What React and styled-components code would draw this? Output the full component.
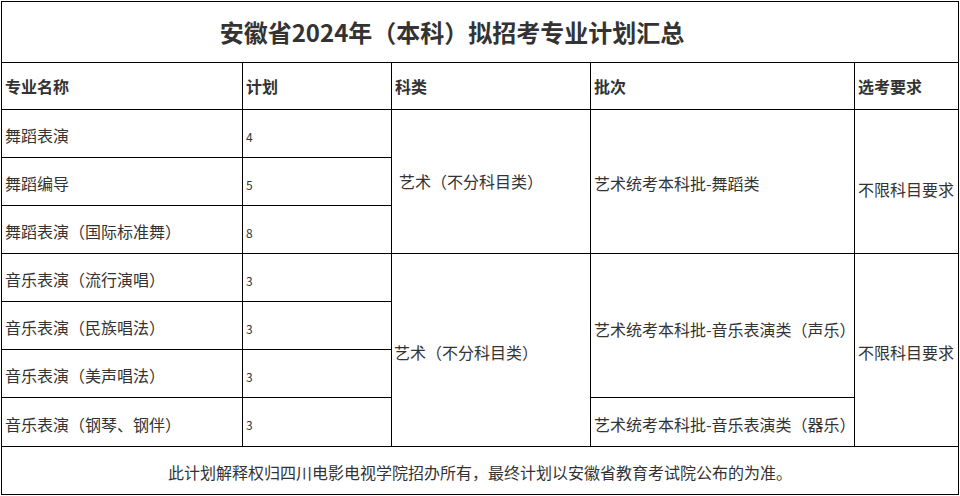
import React from 'react';
import styled, {createGlobalStyle} from 'styled-components';

const GlobalStyle = createGlobalStyle`
    html, body {
        margin: 0;
        padding: 0;
        background: #fff;
    }
    body {
        font-family: "Noto Sans CJK SC", "Liberation Sans", sans-serif;
        color: #333;
    }
`;

const Page = styled.div`
    padding: 1px 0 0 1px;
`;

const Sheet = styled.div`
    display: grid;
    grid-template-columns: 241px 149px 199px 264px 104px;
    grid-template-rows: 61px 47px repeat(6, 48px) 49px 48px;
    width: 957px;
    border-left: 1px solid #000;
    border-top: 1px solid #000;
`;

const Cell = styled.div`
    box-sizing: border-box;
    display: flex;
    align-items: center;
    grid-row: span ${p => p.$rows || 1};
    grid-column: span ${p => p.$cols || 1};
    border-right: 1px solid #000;
    border-bottom: 1px solid #000;
    padding: ${p => p.$nudge > 0 ? p.$nudge : 0}px 0 ${p => p.$nudge < 0 ? -p.$nudge : 0}px ${p => p.$indent ?? 3}px;
    font-size: 16px;
    line-height: 1;
    white-space: nowrap;
    color: #333;
`;

const TitleCell = styled(Cell)`
    grid-column: 1 / -1;
    justify-content: center;
    padding: 0 56px 0 0;
    font-size: 24px;
    font-weight: 700;
`;

const HeadCell = styled(Cell)`
    font-weight: 700;
`;

const NumCell = styled(Cell)`
    font-size: 12px;
    padding-top: 6px;
`;

const NoteCell = styled(Cell)`
    grid-column: 1 / -1;
    justify-content: center;
    padding: 2px 0 0 0;
`;

const heads = ['专业名称', '计划', '科类', '批次', '选考要求'];

const dance = [
    ['舞蹈表演', 4],
    ['舞蹈编导', 5],
    ['舞蹈表演（国际标准舞）', 8],
];

const music = [
    ['音乐表演（流行演唱）', 3],
    ['音乐表演（民族唱法）', 3],
    ['音乐表演（美声唱法）', 3],
    ['音乐表演（钢琴、钢伴）', 3],
];

const Major = ({name, plan}) => (
    <>
        <Cell $nudge={3}>{name}</Cell>
        <NumCell>{plan}</NumCell>
    </>
)

export default function App() {
    const [first, ...restDance] = dance;
    const [m1, ...restMusic] = music;
    const lastMusic = restMusic.pop();

    return (
        <Page>
            <GlobalStyle/>
            <Sheet>
                <TitleCell>安徽省2024年（本科）拟招考专业计划汇总</TitleCell>
                {heads.map(h => <HeadCell key={h}>{h}</HeadCell>)}

                <Major name={first[0]} plan={first[1]}/>
                <Cell $rows={3} $indent={7} $nudge={-2}>艺术（不分科目类）</Cell>
                <Cell $rows={3} $nudge={3}>艺术统考本科批-舞蹈类</Cell>
                <Cell $rows={3} $nudge={15}>不限科目要求</Cell>
                {restDance.map(([n, p]) => <Major key={n} name={n} plan={p}/>)}

                <Major name={m1[0]} plan={m1[1]}/>
                <Cell $rows={4} $indent={2} $nudge={3}>艺术（不分科目类）</Cell>
                <Cell $rows={3} $nudge={7}>艺术统考本科批-音乐表演类（声乐）</Cell>
                <Cell $rows={4} $nudge={4}>不限科目要求</Cell>
                {restMusic.map(([n, p]) => <Major key={n} name={n} plan={p}/>)}
                <Major name={lastMusic[0]} plan={lastMusic[1]}/>
                <Cell $nudge={3}>艺术统考本科批-音乐表演类（器乐）</Cell>

                <NoteCell>此计划解释权归四川电影电视学院招办所有，最终计划以安徽省教育考试院公布的为准。</NoteCell>
            </Sheet>
        </Page>
    );
}
